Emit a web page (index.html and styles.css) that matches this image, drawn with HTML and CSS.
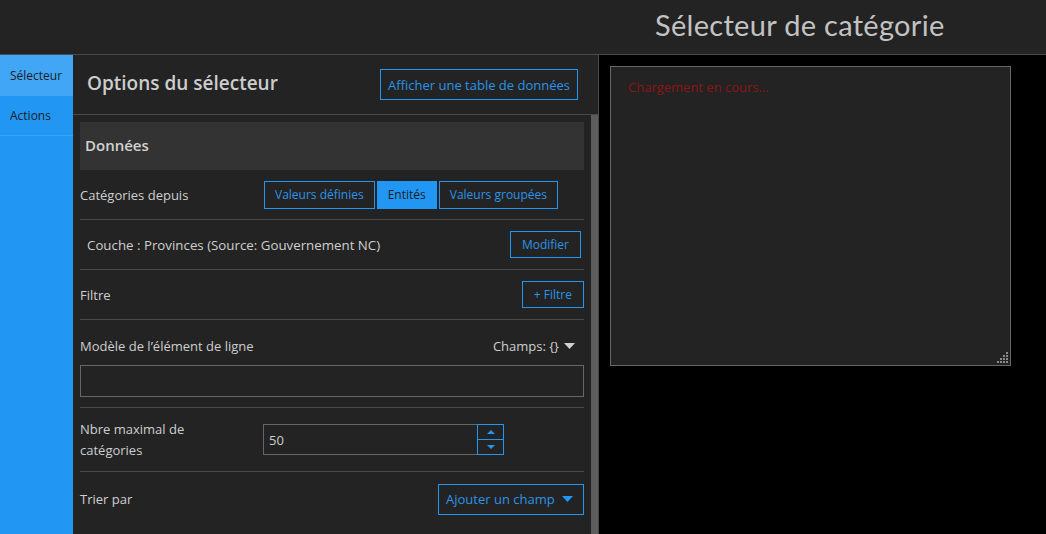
FILE: index.html
```html
<!DOCTYPE html>
<html lang="fr">
<head>
<meta charset="utf-8">
<title>Sélecteur de catégorie</title>
<link rel="stylesheet" href="styles.css">
</head>
<body>
<header class="topbar">
  <h1 class="app-title">Sélecteur de catégorie</h1>
</header>
<div class="workspace">
  <nav class="sidenav">
    <div class="tab tab-active">Sélecteur</div>
    <div class="tab">Actions</div>
  </nav>
  <section class="panel">
    <div class="panel-head">
      <h2 class="panel-title">Options du sélecteur</h2>
      <button class="btn">Afficher une table de données</button>
    </div>
    <div class="panel-scroll">
      <div class="panel-body">
        <div class="section-head">Données</div>
        <div class="row">
          <span class="label">Catégories depuis</span>
          <div class="segmented">
            <button class="btn seg">Valeurs définies</button>
            <button class="btn seg seg-on">Entités</button>
            <button class="btn seg">Valeurs groupées</button>
          </div>
        </div>
        <div class="row row-layer">
          <span class="label">Couche : Provinces (Source: Gouvernement NC)</span>
          <button class="btn btn-sm">Modifier</button>
        </div>
        <div class="row row-filter">
          <span class="label">Filtre</span>
          <button class="btn btn-sm">+ Filtre</button>
        </div>
        <div class="row row-template">
          <div class="template-top">
            <span class="label">Modèle de l’élément de ligne</span>
            <span class="fields">Champs: {} <svg class="caret" width="11" height="6" viewBox="0 0 11 6"><path d="M0 0h11L5.5 6z" fill="#d0d0d0"/></svg></span>
          </div>
          <div class="text-input"></div>
        </div>
        <div class="row row-max">
          <span class="label label-wrap">Nbre maximal de catégories</span>
          <div class="number">
            <span class="number-value">50</span>
            <div class="spin">
              <div class="spin-btn"><svg width="8" height="4" viewBox="0 0 8 4"><path d="M0 4h8L4 0z" fill="#2196f3"/></svg></div>
              <div class="spin-btn"><svg width="8" height="4" viewBox="0 0 8 4"><path d="M0 0h8L4 4z" fill="#2196f3"/></svg></div>
            </div>
          </div>
        </div>
        <div class="row row-sort">
          <span class="label">Trier par</span>
          <button class="btn dropdown">Ajouter un champ <svg width="11" height="6" viewBox="0 0 11 6"><path d="M0 0h11L5.5 6z" fill="#2196f3"/></svg></button>
        </div>
      </div>
      <div class="scrollbar"></div>
    </div>
  </section>
  <main class="preview">
    <div class="preview-box">
      <span class="loading">Chargement en cours...</span>
      <svg class="grip" width="11" height="11" viewBox="0 0 11 11" fill="#8a8a8a">
        <rect x="9" y="0" width="2" height="2"/>
        <rect x="6" y="3" width="2" height="2"/><rect x="9" y="3" width="2" height="2"/>
        <rect x="3" y="6" width="2" height="2"/><rect x="6" y="6" width="2" height="2"/><rect x="9" y="6" width="2" height="2"/>
        <rect x="0" y="9" width="2" height="2"/><rect x="3" y="9" width="2" height="2"/><rect x="6" y="9" width="2" height="2"/><rect x="9" y="9" width="2" height="2"/>
      </svg>
    </div>
  </main>
</div>
</body>
</html>
```
FILE: styles.css
```css
* { box-sizing: border-box; }
html, body { margin: 0; height: 100%; }
body {
  background: #000;
  font-family: "Open Sans", Lato, sans-serif;
  color: #cfcfcf;
  overflow: hidden;
}
.topbar {
  height: 55px;
  background: #232323;
  border-bottom: 1px solid #4a4a4a;
  display: flex;
  align-items: center;
  padding-left: 655px;
}
.app-title {
  margin: 0;
  font-family: Lato, sans-serif;
  font-size: 29px;
  font-weight: 400;
  color: #c2c2c2;
  letter-spacing: 0.3px;
  padding-bottom: 6px;
}
.workspace {
  display: flex;
  height: calc(100% - 55px);
}
.sidenav {
  width: 73px;
  background: #2196f3;
  flex-shrink: 0;
}
.tab {
  height: 40px;
  padding-left: 10px;
  display: flex;
  align-items: center;
  font-size: 12px;
  color: #1d1d1d;
  border-bottom: 1px solid #3aa3f5;
}
.tab-active { height: 41px; background: #41a6f6; border-bottom: none; }
.panel {
  width: 526px;
  flex-shrink: 0;
  background: #232323;
  border-right: 1px solid #4a4a4a;
  display: flex;
  flex-direction: column;
}
.panel-head {
  height: 60px;
  border-bottom: 1px solid #4a4a4a;
  display: flex;
  align-items: center;
  justify-content: space-between;
  padding: 0 20px 0 14px;
}
.panel-title {
  margin: 0;
  font-size: 19px;
  font-weight: 600;
  color: #cdcdcd;
  padding-bottom: 3px;
}
.btn {
  background: transparent;
  border: 1px solid #2196f3;
  color: #2b93e8;
  font-family: inherit;
  font-size: 13px;
  padding: 0 7px;
  height: 31px;
  cursor: pointer;
}
.panel-scroll {
  flex: 1;
  display: flex;
  min-height: 0;
}
.panel-body {
  width: 504px;
  margin: 7px 7px 0 7px;
}
.scrollbar {
  width: 7px;
  background: #5c5c5c;
}
.section-head {
  height: 48px;
  background: #333;
  display: flex;
  align-items: center;
  padding-left: 5px;
  padding-bottom: 2px;
  font-size: 15px;
  font-weight: 600;
  color: #d2d2d2;
}
.row {
  display: flex;
  align-items: center;
  justify-content: space-between;
  border-bottom: 1px solid #4a4a4a;
  height: 50px;
}
.label {
  font-size: 13px;
  color: #cfcfcf;
}
.segmented {
  display: flex;
  gap: 2px;
  margin-right: 26px;
  margin-left: auto;
}
.seg { height: 28px; font-size: 12px; padding: 0 10px; }
.seg-on { background: #2196f3; color: #1d1d1d; }
.row-layer .label { padding-left: 7px; font-size: 13.3px; }
.btn-sm { height: 27px; font-size: 12px; padding: 0 11px; }
.row-layer .btn-sm { margin-right: 3px; }
.row-filter .btn-sm { margin-right: 0; }
.row-template {
  flex-direction: column;
  align-items: stretch;
  justify-content: flex-start;
  height: 88px;
  padding-top: 15px;
}
.template-top {
  display: flex;
  justify-content: space-between;
  align-items: center;
  height: 21px;
}
.fields {
  font-size: 13px;
  margin-right: 9px;
  display: flex;
  align-items: center;
  gap: 5px;
}
.text-input {
  margin-top: 9px;
  height: 32px;
  border: 1px solid #666;
}
.row-max {
  height: 64px;
  justify-content: flex-start;
}
.label-wrap {
  width: 183px;
  padding-right: 60px;
  line-height: 21px;
}
.number {
  width: 241px;
  height: 31px;
  border: 1px solid #666;
  display: flex;
  align-items: center;
  justify-content: space-between;
  border-right: none;
}
.number-value { font-size: 13px; padding-left: 5px; }
.spin {
  width: 27px;
  height: 31px;
  display: flex;
  flex-direction: column;
  margin-top: -2px;
  margin-bottom: -2px;
}
.spin-btn {
  flex: 1;
  border: 1px solid #2196f3;
  display: flex;
  align-items: center;
  justify-content: center;
}
.spin-btn + .spin-btn { border-top: none; }
.row-sort { border-bottom: none; height: 54px; }
.dropdown {
  height: 31px;
  width: 146px;
  display: flex;
  align-items: center;
  justify-content: space-between;
  padding: 0 10px 0 7px;
}
.preview {
  flex: 1;
  background: #000;
  padding: 11px;
}
.preview-box {
  width: 401px;
  height: 300px;
  background: #232323;
  border: 1px solid #666;
  position: relative;
  padding: 8px 17px;
}
.loading {
  font-size: 13px;
  color: #8a1515;
}
.grip {
  position: absolute;
  right: 2px;
  bottom: 2px;
}
```
